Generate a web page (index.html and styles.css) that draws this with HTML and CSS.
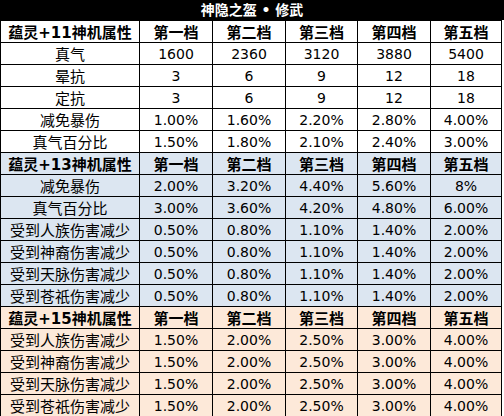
FILE: index.html
```html
<!DOCTYPE html>
<html lang="zh-CN">
<head>
<meta charset="utf-8">
<title>神隐之盔·修武</title>
<link rel="stylesheet" href="styles.css">
</head>
<body>
<div class="sheet">
  <div class="title">神隐之盔 • 修武</div>
  <div class="grid">
    <div class="row head"><div>蕴灵+11神机属性</div><div>第一档</div><div>第二档</div><div>第三档</div><div>第四档</div><div>第五档</div></div>
    <div class="row"><div>真气</div><div>1600</div><div>2360</div><div>3120</div><div>3880</div><div>5400</div></div>
    <div class="row"><div>晕抗</div><div>3</div><div>6</div><div>9</div><div>12</div><div>18</div></div>
    <div class="row"><div>定抗</div><div>3</div><div>6</div><div>9</div><div>12</div><div>18</div></div>
    <div class="row"><div>减免暴伤</div><div>1.00%</div><div>1.60%</div><div>2.20%</div><div>2.80%</div><div>4.00%</div></div>
    <div class="row"><div>真气百分比</div><div>1.50%</div><div>1.80%</div><div>2.10%</div><div>2.40%</div><div>3.00%</div></div>

    <div class="row head blue"><div>蕴灵+13神机属性</div><div>第一档</div><div>第二档</div><div>第三档</div><div>第四档</div><div>第五档</div></div>
    <div class="row blue"><div>减免暴伤</div><div>2.00%</div><div>3.20%</div><div>4.40%</div><div>5.60%</div><div>8%</div></div>
    <div class="row blue"><div>真气百分比</div><div>3.00%</div><div>3.60%</div><div>4.20%</div><div>4.80%</div><div>6.00%</div></div>
    <div class="row blue"><div>受到人族伤害减少</div><div>0.50%</div><div>0.80%</div><div>1.10%</div><div>1.40%</div><div>2.00%</div></div>
    <div class="row blue"><div>受到神裔伤害减少</div><div>0.50%</div><div>0.80%</div><div>1.10%</div><div>1.40%</div><div>2.00%</div></div>
    <div class="row blue"><div>受到天脉伤害减少</div><div>0.50%</div><div>0.80%</div><div>1.10%</div><div>1.40%</div><div>2.00%</div></div>
    <div class="row blue"><div>受到苍祇伤害减少</div><div>0.50%</div><div>0.80%</div><div>1.10%</div><div>1.40%</div><div>2.00%</div></div>

    <div class="row head peach"><div>蕴灵+15神机属性</div><div>第一档</div><div>第二档</div><div>第三档</div><div>第四档</div><div>第五档</div></div>
    <div class="row peach"><div>受到人族伤害减少</div><div>1.50%</div><div>2.00%</div><div>2.50%</div><div>3.00%</div><div>4.00%</div></div>
    <div class="row peach"><div>受到神裔伤害减少</div><div>1.50%</div><div>2.00%</div><div>2.50%</div><div>3.00%</div><div>4.00%</div></div>
    <div class="row peach"><div>受到天脉伤害减少</div><div>1.50%</div><div>2.00%</div><div>2.50%</div><div>3.00%</div><div>4.00%</div></div>
    <div class="row peach"><div>受到苍祇伤害减少</div><div>1.50%</div><div>2.00%</div><div>2.50%</div><div>3.00%</div><div>4.00%</div></div>
  </div>
</div>
</body>
</html>
```
FILE: styles.css
```css
html, body {
  margin: 0;
  padding: 0;
  background: #ffffff;
}

.sheet {
  width: 504px;
  font-family: "DejaVu Sans", "Noto Sans CJK SC", sans-serif;
  color: #000000;
}

.title {
  height: 20px;
  background: #000000;
  color: #ffffff;
  font-weight: bold;
  font-size: 14px;
  line-height: 20px;
  text-align: center;
}

.grid {
  width: 500px;
  display: flex;
  flex-direction: column;
  gap: 1px;
  padding: 1px;
  background: #000000;
}

.row {
  display: grid;
  grid-template-columns: 138px 72px 72px 71px 72px 70px;
  column-gap: 1px;
  height: 21px;
}

.row > div {
  background: #ffffff;
  display: flex;
  align-items: center;
  justify-content: center;
  font-size: 14px;
  white-space: nowrap;
  overflow: hidden;
}

.row > div:first-child {
  font-size: 15px;
}

.row.blue > div {
  background: #dce6f1;
}

.row.peach > div {
  background: #fde9d9;
}

.row.head > div {
  font-weight: bold;
  font-size: 15px;
}
```
